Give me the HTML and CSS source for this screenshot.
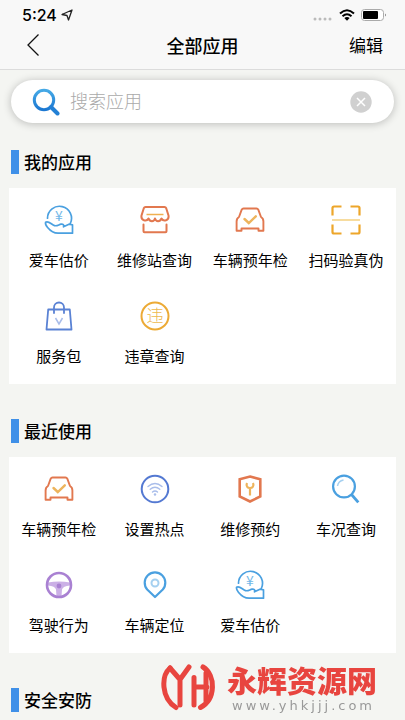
FILE: index.html
```html
<!DOCTYPE html>
<html lang="zh-CN">
<head>
<meta charset="utf-8">
<meta name="viewport" content="width=device-width, initial-scale=1">
<title>全部应用</title>
<link rel="stylesheet" href="styles.css">
</head>
<body>
<svg class="defs" aria-hidden="true">
  <defs>
    <linearGradient id="lens" x1="0" y1="0" x2="0" y2="1"><stop offset="0" stop-color="#45a9e6"/><stop offset="1" stop-color="#1c78d2"/></linearGradient>
    <symbol id="value" viewBox="0 0 30 30">
      <g fill="none" stroke="#4aa0e0" stroke-width="1.700" stroke-linecap="round" stroke-linejoin="round">
        <path d="M3.500 13.200A12 12 0 1 1 26.300 18.500"/>
        <path d="M1.600 17.200c-.5 1.600.3 3.200 1.800 5 2.600 3.200 5.600 6 10.600 6h14.500v-8.400l-3.500-.6-5.500 2.600c.8-2-.5-2.900-2.500-2.600-2 .3-4 2.200-6.500 1.400-3-1-6-5.400-8.900-3.400z"/>
      </g>
      <text class="yen" x="15" y="16">¥</text>
    </symbol>
    <symbol id="shop" viewBox="0 0 30 30">
      <g fill="none" stroke="#e2784f" stroke-width="2" stroke-linecap="round" stroke-linejoin="round">
        <path d="M5.500 2h19q1.200 0 1.700 1.200l2.300 7.300c.8 5-5 6.500-7 3-1.500 3.500-5.500 3.500-6.500 0-1 3.500-5 3.500-6.500 0-2 3.500-7.800 2-7-3l2.300-7.300Q4.300 2 5.500 2z"/>
        <path d="M3.500 19.500v6.700q0 1 1 1h21q1 0 1-1v-6.700"/>
      </g>
      <path d="M6.500 9.500h17" stroke="#f0b050" stroke-width="1.500"/>
    </symbol>
    <symbol id="car" viewBox="0 0 30 30">
      <path d="M8.500 3.500h13q1.200 0 1.800 1.200l2.700 7.300q2.400 1.200 2.400 4.500v9.200h-4.900v-2.200h-17v2.200H1.600v-9.200Q1.600 13.200 4 12l2.700-7.300Q7.300 3.500 8.500 3.500z" fill="none" stroke="#e2784f" stroke-width="1.900" stroke-linejoin="round"/>
      <path d="M9.500 14l4.300 4 7-6.700" fill="none" stroke="#edb45c" stroke-width="2.400" stroke-linecap="round"/>
    </symbol>
    <symbol id="scan" viewBox="0 0 30 30">
      <path d="M1.500 10.500V3q0-1.500 1.500-1.500h7.500M19.500 1.500H27q1.500 0 1.500 1.500v7.500M28.500 19.500V27q0 1.500-1.500 1.500h-7.500M10.500 28.500H3q-1.500 0-1.500-1.500v-7.500" fill="none" stroke="#eda62a" stroke-width="2.200"/>
      <path d="M1 15h28" stroke="#f6d488" stroke-width="1.600"/>
    </symbol>
    <symbol id="bag" viewBox="0 0 30 30">
      <g fill="none" stroke="#5a82d4" stroke-width="1.800" stroke-linejoin="round" stroke-linecap="round">
        <path d="M4.200 8.500h21.600l1.700 20h-25z"/>
        <path d="M10 12V6.500a5 5 0 0 1 10 0V12"/>
      </g>
      <path d="M11.500 17l3.500 6 3.500-6" fill="none" stroke="#a9bdea" stroke-width="1.500"/>
    </symbol>
    <symbol id="violation" viewBox="0 0 30 30">
      <circle cx="15" cy="15" r="13.500" fill="none" stroke="#ecaa35" stroke-width="2"/>
      <text class="wei" x="15" y="21">违</text>
    </symbol>
    <symbol id="hotspot" viewBox="0 0 30 30">
      <circle cx="15" cy="15" r="13.300" fill="none" stroke="#5479d2" stroke-width="2"/>
      <g fill="none" stroke="#a9bdea" stroke-width="1.400" stroke-linecap="round"><path d="M8 12.500q7-6 14 0M10.200 15.300q4.800-4 9.600 0M12.500 18q2.500-2 5 0"/></g>
      <circle cx="15" cy="20.500" r="1.200" fill="#a9bdea"/>
    </symbol>
    <symbol id="repair" viewBox="0 0 30 30">
      <path d="M15 2.500l10.300 2.700v17.300L15 27.500 4.700 22.500V5.200z" fill="none" stroke="#e2784f" stroke-width="2.600"/>
      <path d="M12 9c-1.300 3 .5 5 3 5s4.300-2 3-5M15 14v7.500" fill="none" stroke="#edb45c" stroke-width="2.200"/>
    </symbol>
    <symbol id="inspect" viewBox="0 0 30 30">
      <circle cx="13" cy="12.500" r="10.900" fill="none" stroke="#4aa0e0" stroke-width="2.200"/>
      <path d="M20.500 20.500l6.800 7.800" stroke="#4aa0e0" stroke-width="2.800"/>
      <path d="M6.500 12q.8-5 6-6" fill="none" stroke="#a5d0f0" stroke-width="1.500"/>
    </symbol>
    <symbol id="drive" viewBox="0 0 30 30">
      <path d="M4 12.500q11-2 22 0v3q-7 .5-8 4l-.5 7h-5l-.5-7q-1-3.500-8-4z" fill="#cbb0e6"/>
      <circle cx="15" cy="15" r="12" fill="none" stroke="#a981d2" stroke-width="2.600"/>
      <circle cx="15" cy="16" r="2.400" fill="#a981d2"/>
    </symbol>
    <symbol id="pin" viewBox="0 0 30 30">
      <path d="M15 27L7.200 19.500a10.300 10.300 0 1 1 15.600 0z" fill="none" stroke="#4aa0e0" stroke-width="2.200" stroke-linejoin="round"/>
      <circle cx="15" cy="13" r="3.500" fill="none" stroke="#a5d0f0" stroke-width="2"/>
    </symbol>
  </defs>
</svg>

<header class="top">
  <div class="status">
    <span class="time">5:24</span>
    <svg class="locate" viewBox="0 0 12 12"><path d="M1 5.500L11 1 7.500 11 6 6.500z" fill="none" stroke="#222" stroke-width="1.300" stroke-linejoin="round"/></svg>
    <span class="signals">
      <svg width="20" height="4" viewBox="0 0 20 4" fill="#bbb"><circle cx="2" cy="2" r="1.500"/><circle cx="7" cy="2" r="1.500"/><circle cx="12" cy="2" r="1.500"/><circle cx="17" cy="2" r="1.500"/></svg>
      <svg width="16" height="12" viewBox="0 0 16 12"><g fill="none" stroke="#000" stroke-width="2"><path d="M1 4.500q7-6.500 14 0M3.500 7.200q4.500-4 9 0"/></g><path d="M5.300 9q2.700-2 5.400 0L8 11.700z"/></svg>
      <svg width="26" height="12" viewBox="0 0 26 12"><rect x=".5" y=".5" width="22" height="11" rx="3" fill="#fff" stroke="#aaa"/><rect x="2" y="2" width="15" height="8" rx="1"/><path d="M24 4.500q2 1.500 0 3z" fill="#888"/></svg>
    </span>
  </div>
  <nav class="nav">
    <button class="back" aria-label="返回"><svg width="12" height="22" viewBox="0 0 12 22"><path d="M11.500 .5L1 11l10.500 10.500" fill="none" stroke="#111" stroke-width="1.300"/></svg></button>
    <h1>全部应用</h1>
    <button class="edit">编辑</button>
  </nav>
</header>

<main>
  <form class="search">
    <svg width="28" height="28" viewBox="0 0 28 28"><circle cx="12" cy="12" r="9.700" fill="none" stroke="url(#lens)" stroke-width="3"/><path d="M19 19l6.500 6.500" stroke="#2380d5" stroke-width="4" stroke-linecap="round"/></svg>
    <input type="text" placeholder="搜索应用" aria-label="搜索应用">
    <button type="reset" aria-label="清除"><svg width="22" height="22" viewBox="0 0 22 22"><circle cx="11" cy="11" r="10.700" fill="#d0d0d0"/><path d="M7 7l8 8M15 7l-8 8" stroke="#fff" stroke-width="1.500"/></svg></button>
  </form>

  <section>
    <h2>我的应用</h2>
    <div class="grid">
      <button><svg><use href="#value"/></svg>爱车估价</button>
      <button><svg><use href="#shop"/></svg>维修站查询</button>
      <button><svg><use href="#car"/></svg>车辆预年检</button>
      <button><svg><use href="#scan"/></svg>扫码验真伪</button>
      <button><svg><use href="#bag"/></svg>服务包</button>
      <button><svg><use href="#violation"/></svg>违章查询</button>
    </div>
  </section>

  <section>
    <h2>最近使用</h2>
    <div class="grid">
      <button><svg><use href="#car"/></svg>车辆预年检</button>
      <button><svg><use href="#hotspot"/></svg>设置热点</button>
      <button><svg><use href="#repair"/></svg>维修预约</button>
      <button><svg><use href="#inspect"/></svg>车况查询</button>
      <button><svg><use href="#drive"/></svg>驾驶行为</button>
      <button><svg><use href="#pin"/></svg>车辆定位</button>
      <button><svg><use href="#value"/></svg>爱车估价</button>
    </div>
  </section>

  <section>
    <h2>安全安防</h2>
  </section>
</main>

<aside class="mark">
  <svg width="55" height="48" viewBox="0 0 55 48"><g fill="none" stroke="#e8453f" stroke-width="5" stroke-linecap="round" stroke-linejoin="round"><path d="M9 5C0 13 0 35 15 44.500"/><path d="M9 5l10 11.500L28 4M19 16.500V42"/><path d="M33 14.500V42M33 24h13M45 10v28"/><path d="M42 4c13 8 13 32-2.500 40.500"/></g></svg>
  <div>
    <strong>永辉资源网</strong>
    <span>www.yhkjjj.com</span>
  </div>
</aside>
</body>
</html>
```
FILE: styles.css
```css
* {
  box-sizing: border-box;
}

body {
  margin: 0;
  min-height: 100vh;
  background: #f4f5f2;
  color: #000;
  font-family: "Noto Sans CJK SC", sans-serif;
}

button,
input {
  margin: 0;
  padding: 0;
  border: 0;
  background: none;
  color: inherit;
  font: inherit;
}

svg {
  display: block;
  flex: none;
}

h1,
h2 {
  margin: 0;
  font-weight: 500;
}

.defs {
  position: absolute;
  width: 0;
  height: 0;
}

.top {
  background: #f8f8f8;
  border-bottom: 1px solid #dcdcdc;
}

.status {
  display: flex;
  align-items: center;
  height: 24px;
  padding: 6px 18px 0 22px;
}

.time {
  font: 500 16px/18px Inter, sans-serif;
}

.locate {
  width: 12px;
  height: 12px;
  margin-left: 4px;
}

.signals {
  display: flex;
  align-items: center;
  gap: 6px;
  margin-left: auto;
}

.signals svg:first-child {
  margin-top: 8px;
}

.nav {
  display: grid;
  grid-template-columns: 1fr auto 1fr;
  align-items: center;
  height: 45px;
  padding: 0 22px 4px;
}

.nav h1 {
  font-size: 18px;
  line-height: 24px;
}

.back {
  justify-self: start;
  padding-left: 5px;
}

.edit {
  justify-self: end;
  font-size: 17px;
  line-height: 24px;
}

.search {
  display: flex;
  align-items: center;
  height: 43px;
  margin: 10px 11px 27px;
  padding: 0 22px 0 21px;
  border-radius: 22px;
  background: #fff;
  box-shadow: 0 1px 8px rgba(0, 0, 0, 0.24);
}

.search input {
  flex: 1;
  min-width: 0;
  height: 26px;
  margin: 0 0 3px 10px;
  font-size: 18px;
  font-weight: 300;
  line-height: 26px;
  outline: 0;
}

.search input::placeholder {
  color: #aaa;
  opacity: 1;
}

section {
  margin-bottom: 35px;
}

section:last-child {
  margin-bottom: 0;
}

h2 {
  margin: 0 11px 14px;
  padding-left: 5px;
  border-left: 8px solid #3f90e8;
  font-size: 17px;
  line-height: 24px;
}

section:last-child h2 {
  margin-bottom: 0;
}

.grid {
  display: grid;
  grid-template-columns: repeat(4, 1fr);
  grid-auto-rows: 96px;
  margin: 0 9px;
  padding: 0 2px 4px;
  background: #fff;
}

.grid button {
  display: flex;
  flex-direction: column;
  align-items: center;
  gap: 15px;
  padding-top: 17px;
  font-size: 15px;
  line-height: 20px;
  white-space: nowrap;
}

.grid svg {
  width: 30px;
  height: 30px;
}

.yen {
  fill: #73b8e8;
  font-size: 14px;
  text-anchor: middle;
}

.wei {
  fill: #edb84f;
  font-size: 17px;
  font-weight: 300;
  text-anchor: middle;
}

.mark {
  position: fixed;
  right: 28px;
  bottom: 6px;
  display: flex;
  align-items: center;
  gap: 11px;
}

.mark strong,
.mark span {
  display: block;
}

.mark strong {
  color: #e8453f;
  font-size: 30px;
  font-weight: 900;
  line-height: 38px;
}

.mark span {
  margin-right: -5px;
  padding-left: 5px;
  color: #999;
  font: 13px/16px "DejaVu Sans", sans-serif;
  letter-spacing: 3px;
}
```
